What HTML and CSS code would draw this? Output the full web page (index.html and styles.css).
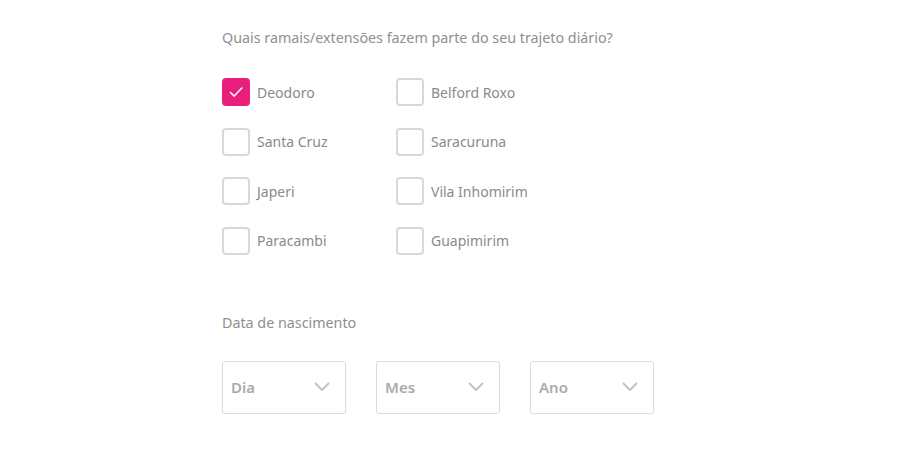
FILE: index.html
```html
<!DOCTYPE html>
<html lang="pt">
<head>
<meta charset="utf-8">
<link rel="stylesheet" href="styles.css">
</head>
<body>
<main class="form">
  <section class="group">
    <p class="question">Quais ramais/extensões fazem parte do seu trajeto diário?</p>
    <div class="options">
      <label class="opt"><span class="box checked"><svg viewBox="0 0 28 28" width="28" height="28"><path d="M8.5 14.5l3.8 3.6 7.5-8" fill="none" stroke="#fff" stroke-width="1.5" stroke-linecap="round" stroke-linejoin="round"/></svg></span>Deodoro</label>
      <label class="opt"><span class="box"></span>Belford Roxo</label>
      <label class="opt"><span class="box"></span>Santa Cruz</label>
      <label class="opt"><span class="box"></span>Saracuruna</label>
      <label class="opt"><span class="box"></span>Japeri</label>
      <label class="opt"><span class="box"></span>Vila Inhomirim</label>
      <label class="opt"><span class="box"></span>Paracambi</label>
      <label class="opt"><span class="box"></span>Guapimirim</label>
    </div>
  </section>
  <section class="group birth">
    <p class="question">Data de nascimento</p>
    <div class="selects">
      <div class="select"><span>Dia</span><svg viewBox="0 0 16 10" width="16" height="10"><path d="M1.5 1.5l6.5 6.5 6.5-6.5" fill="none" stroke="#c4c4c4" stroke-width="2" stroke-linecap="round" stroke-linejoin="round"/></svg></div>
      <div class="select"><span>Mes</span><svg viewBox="0 0 16 10" width="16" height="10"><path d="M1.5 1.5l6.5 6.5 6.5-6.5" fill="none" stroke="#c4c4c4" stroke-width="2" stroke-linecap="round" stroke-linejoin="round"/></svg></div>
      <div class="select"><span>Ano</span><svg viewBox="0 0 16 10" width="16" height="10"><path d="M1.5 1.5l6.5 6.5 6.5-6.5" fill="none" stroke="#c4c4c4" stroke-width="2" stroke-linecap="round" stroke-linejoin="round"/></svg></div>
    </div>
  </section>
</main>
</body>
</html>
```

FILE: styles.css
```css
html, body {
  margin: 0;
  padding: 0;
  background: #fff;
}
body {
  font-family: "Noto Sans", "Open Sans", sans-serif;
  color: #8a8a8a;
}
.form {
  padding: 27px 0 0 222px;
}
.question {
  margin: 0;
  font-size: 14.3px;
  line-height: 22px;
  color: #8f8f8f;
}
.options {
  display: grid;
  grid-template-columns: 174px 174px;
  row-gap: 21.5px;
  margin-top: 29px;
  width: 348px;
}
.opt {
  display: flex;
  align-items: center;
  gap: 7px;
  font-size: 14px;
  color: #8a8a8a;
  height: 28px;
}
.box {
  width: 28px;
  height: 28px;
  box-sizing: border-box;
  border: 2px solid #d3dbd9;
  border-radius: 4px;
  flex: none;
  display: flex;
}
.box.checked {
  background: #e8207c;
  border-color: #e8207c;
}
.box.checked svg {
  margin: -2px;
}
.birth {
  margin-top: 57px;
}
.selects {
  display: flex;
  gap: 30px;
  margin-top: 27px;
}
.select {
  width: 124px;
  height: 53px;
  box-sizing: border-box;
  border: 1px solid #dcdcdc;
  border-radius: 3px;
  display: flex;
  align-items: center;
  justify-content: space-between;
  padding: 0 15px 0 8px;
  font-size: 15px;
  font-weight: 600;
  color: #ababab;
}
```
